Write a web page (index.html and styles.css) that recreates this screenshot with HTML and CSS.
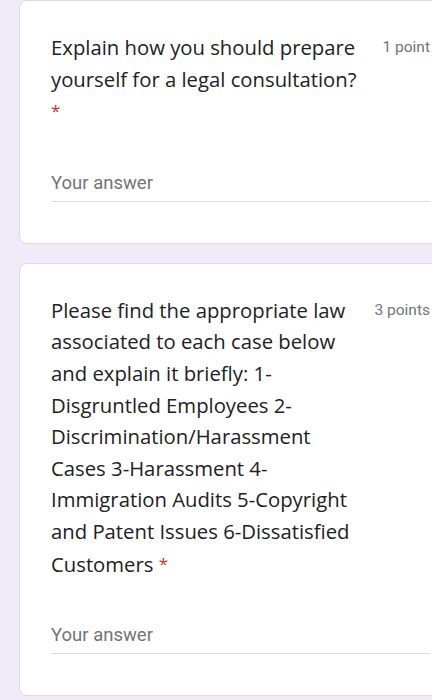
FILE: index.html
```html
<!DOCTYPE html>
<html lang="en">
<head>
<meta charset="utf-8">
<title>Form</title>
<link rel="stylesheet" href="styles.css">
</head>
<body>
<main class="form">
  <section class="card card-first">
    <div class="q-head">
      <div class="q-title">Explain how you should prepare yourself for a legal consultation? <span class="req">*</span></div>
      <div class="q-points">1 point</div>
    </div>
    <div class="answer">Your answer</div>
  </section>
  <section class="card">
    <div class="q-head">
      <div class="q-title">Please find the appropriate law associated to each case below and explain it briefly: 1-Disgruntled Employees 2-Discrimination/Harassment Cases 3-Harassment 4-Immigration Audits 5-Copyright and Patent Issues 6-Dissatisfied Customers <span class="req">*</span></div>
      <div class="q-points">3 points</div>
    </div>
    <div class="answer">Your answer</div>
  </section>
</main>
</body>
</html>
```
FILE: styles.css
```css
html, body {
  margin: 0;
  padding: 0;
  overflow: hidden;
  background: #f0ebf8;
}
body {
  width: 432px;
  height: 700px;
  font-family: Roboto, "Liberation Sans", sans-serif;
}
.form {
  display: flex;
  flex-direction: column;
  gap: 19px;
  padding-left: 19px;
}
.card {
  box-sizing: border-box;
  width: 444px;
  background: #fff;
  border: 1px solid #dadce0;
  border-radius: 8px;
  padding: 31px 32px 41px 31px;
}
.q-head {
  display: flex;
  align-items: flex-start;
  gap: 17px;
}
.q-title {
  flex: 1;
  font-family: "Open Sans", Roboto, sans-serif;
  font-size: 20.3px;
  line-height: 31.6px;
  color: #202124;
}
.req {
  color: #d93025;
  font-size: 17px;
  vertical-align: 2px;
}
.q-points {
  flex: none;
  font-size: 15.5px;
  line-height: 31.6px;
  color: #70757a;
}
.answer {
  margin-top: 43px;
  font-size: 18.5px;
  line-height: 24px;
  color: #70757a;
  padding-bottom: 6px;
  border-bottom: 1px solid #dadce0;
}
```
